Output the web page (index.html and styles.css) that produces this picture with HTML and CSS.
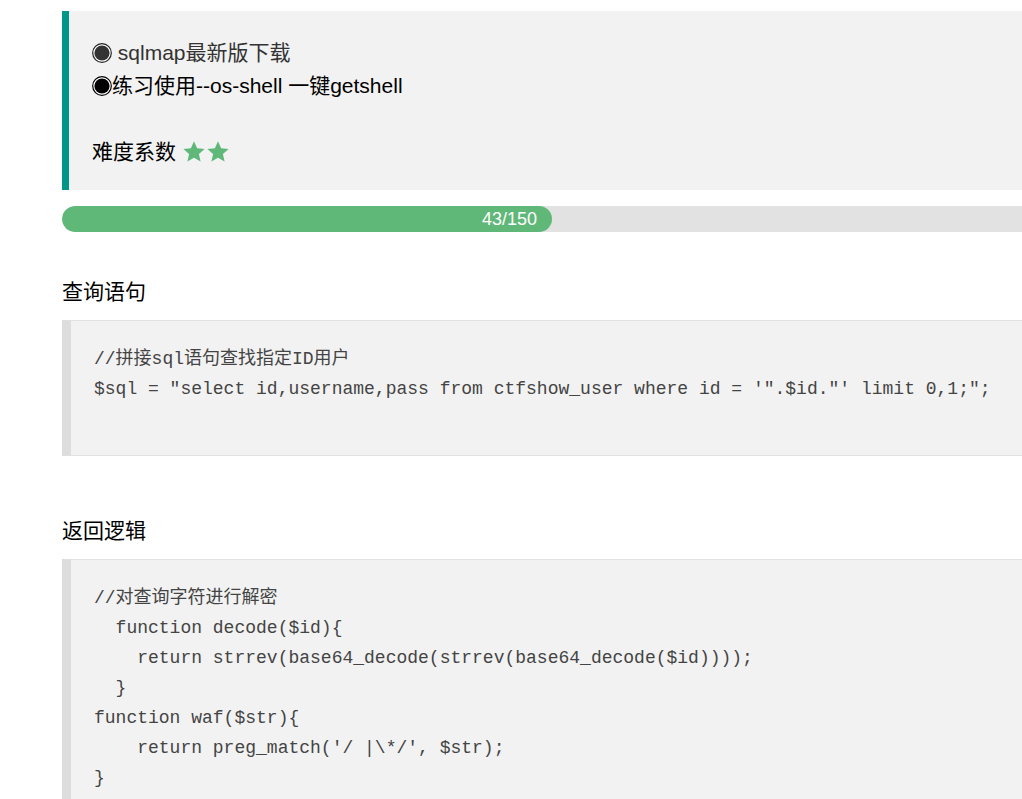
FILE: index.html
```html
<!DOCTYPE html>
<html lang="zh-CN">
<head>
<meta charset="utf-8">
<title>ctfshow</title>
<link rel="stylesheet" href="styles.css">
</head>
<body>
<div class="page">
  <blockquote class="note">
    <div class="line line-gray"><svg class="dot" viewBox="0 0 20 20" width="20" height="20"><circle cx="10" cy="10" r="9.3" fill="#fff" stroke="#222" stroke-width="1.2"/><circle cx="10" cy="10" r="7.6" fill="#333"/></svg> sqlmap最新版下载</div>
    <div class="line"><svg class="dot" viewBox="0 0 20 20" width="20" height="20"><circle cx="10" cy="10" r="9.3" fill="#fff" stroke="#000" stroke-width="1.2"/><circle cx="10" cy="10" r="7.6" fill="#000"/></svg>练习使用--os-shell 一键getshell</div>
    <div class="line"></div>
    <div class="line">难度系数 <span class="stars"><svg viewBox="0 0 24 24" width="24" height="24"><path d="M12 1.2l3.1 7 7.5.8-5.7 5.1 1.7 7.5L12 17.8l-6.6 3.8 1.7-7.5L1.4 9l7.5-.8z" fill="#5FB878"/></svg><svg viewBox="0 0 24 24" width="24" height="24"><path d="M12 1.2l3.1 7 7.5.8-5.7 5.1 1.7 7.5L12 17.8l-6.6 3.8 1.7-7.5L1.4 9l7.5-.8z" fill="#5FB878"/></svg></span></div>
  </blockquote>

  <div class="progress">
    <div class="progress-bar" style="width: 28.67%"><span class="progress-text">43/150</span></div>
  </div>

  <h3 class="title title-first">查询语句</h3>
  <pre class="code">//拼接sql语句查找指定ID用户
$sql = "select id,username,pass from ctfshow_user where id = '".$id."' limit 0,1;";

</pre>

  <h3 class="title">返回逻辑</h3>
  <pre class="code">//对查询字符进行解密
  function decode($id){
    return strrev(base64_decode(strrev(base64_decode($id))));
  }
function waf($str){
    return preg_match('/ |\*/', $str);
}

</pre>
</div>
</body>
</html>
```

FILE: styles.css
```css
html, body {
  margin: 0;
  padding: 0;
  background: #fff;
  overflow: hidden;
}

body {
  font-family: "Liberation Sans", "Noto Sans CJK SC", sans-serif;
  color: #000;
}

.page {
  width: 1709px;
  padding: 11px 0 0 62px;
}

.note {
  margin: 0;
  background: #f2f2f2;
  border-left: 7px solid #009688;
  padding: 25px 0 22px 23px;
  font-size: 21px;
  line-height: 33px;
}

.line {
  height: 33px;
  display: flex;
  align-items: center;
  white-space: pre;
}

.line-gray {
  color: #333;
}

.dot {
  display: block;
  flex: none;
}

.stars {
  display: inline-flex;
  gap: 0;
}

.stars svg {
  display: block;
}

.progress {
  margin-top: 16px;
  height: 26px;
  border-radius: 13px;
  background: #e2e2e2;
  overflow: hidden;
}

.progress-bar {
  height: 26px;
  border-radius: 13px;
  background: #5FB878;
  display: flex;
  justify-content: flex-end;
  align-items: center;
}

.progress-text {
  color: #fff;
  font-size: 18px;
  padding-right: 15px;
}

.title {
  margin: 61px 0 14px;
  font-size: 21px;
  font-weight: normal;
  line-height: 28px;
}

.title-first {
  margin-top: 46px;
}

.code {
  margin: 0;
  background: #f2f2f2;
  border: 1px solid #e2e2e2;
  border-left: 9px solid #ddd;
  padding: 23px 0 21px 23px;
  font-family: "Liberation Mono", "Noto Sans CJK SC", monospace;
  font-size: 18px;
  line-height: 30px;
  color: #444;
}
```
